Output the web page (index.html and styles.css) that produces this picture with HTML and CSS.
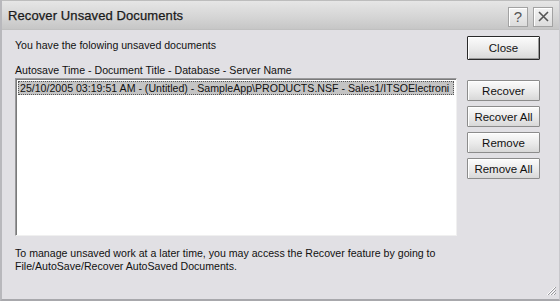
FILE: index.html
```html
<!DOCTYPE html>
<html>
<head>
<meta charset="utf-8">
<link rel="stylesheet" href="styles.css">
</head>
<body>
<div class="dialog">
  <div class="titlebar">
    <span class="title">Recover Unsaved Documents</span>
    <div class="tbtns">
      <span class="tbtn help">?</span>
      <span class="tbtn close">
        <svg width="13" height="13" viewBox="0 0 13 13"><path d="M2 2 L11 11 M11 2 L2 11" stroke="#555" stroke-width="1.6" fill="none"/></svg>
      </span>
    </div>
  </div>
  <div class="body">
    <div class="main">
      <div class="left">
        <p class="intro">You have the folowing unsaved documents</p>
        <p class="colhead">Autosave Time - Document Title - Database - Server Name</p>
        <div class="listbox">
          <div class="row selected">25/10/2005 03:19:51 AM - (Untitled) - SampleApp\PRODUCTS.NSF - Sales1/ITSOElectroni</div>
        </div>
      </div>
      <div class="right">
        <button class="btn btn-close">Close</button>
        <div class="actions">
          <button class="btn">Recover</button>
          <button class="btn">Recover All</button>
          <button class="btn">Remove</button>
          <button class="btn">Remove All</button>
        </div>
      </div>
    </div>
    <p class="footer">To manage unsaved work at a later time, you may access the Recover feature by going to<br>File/AutoSave/Recover AutoSaved Documents.</p>
    <svg class="grip" width="12" height="12" viewBox="0 0 12 12">
      <path d="M11 3 L3 11 M11 6 L6 11 M11 9 L9 11" stroke="#fff" stroke-width="1" fill="none"/>
      <path d="M12 3 L4 11 M12 6 L7 11 M12 9 L10 11" stroke="#9a9a9e" stroke-width="1" fill="none"/>
    </svg>
  </div>
</div>
</body>
</html>
```
FILE: styles.css
```css
* { box-sizing: border-box; }
html, body { margin: 0; padding: 0; }
body {
  width: 560px;
  height: 301px;
  overflow: hidden;
  font-family: "Liberation Sans", Arial, sans-serif;
  font-size: 10.6px;
  color: #111;
  background: #dcdce0;
}
.dialog {
  width: 560px;
  height: 301px;
  display: flex;
  flex-direction: column;
  border-left: 2px solid #b8b8bc;
  border-right: 1px solid #c8c8cc;
  border-bottom: 2px solid #a8a8ac;
  background: #e1e0e4;
}
.titlebar {
  height: 30px;
  flex: none;
  display: flex;
  align-items: center;
  justify-content: space-between;
  padding: 0 6px 0 6px;
  background: linear-gradient(#e6e6e6, #d4d4d4 60%, #c6c6c6);
  border-top: 1px solid #bdbdbd;
  border-bottom: 1px solid #c0c0c0;
}
.title {
  font-size: 13px;
  color: #1a1a1a;
  letter-spacing: 0.1px;
  padding-top: 1px;
  -webkit-text-stroke: 0.25px #1a1a1a;
}
.tbtns { display: flex; gap: 5px; padding-top: 3px; }
.tbtn {
  width: 20px;
  height: 20px;
  display: flex;
  align-items: center;
  justify-content: center;
  background: linear-gradient(#f4f4f4, #dcdcdc);
  border: 1px solid #a2a2a2;
  box-shadow: inset 1px 1px 0 #fff;
  font-size: 15px;
  color: #555;
}
.body {
  flex: 1;
  position: relative;
  padding: 6px 0 0 13px;
  display: flex;
  flex-direction: column;
}
.main { display: flex; }
.left { width: 442px; }
.intro { margin: 3px 0 0 0; height: 17px; line-height: 13px; }
.colhead { margin: 8px 0 0 0; line-height: 13px; }
.listbox {
  width: 442px;
  height: 158px;
  margin-top: 1px;
  background: #fff;
  border: 1px solid #9a9a9c;
  border-right-color: #f0f0f0;
  border-bottom-color: #f0f0f0;
  box-shadow: inset 1px 1px 0 #7a7a7a;
  padding: 2px 2px 0 2px;
  overflow: hidden;
}
.row {
  white-space: nowrap;
  height: 14px;
  line-height: 12px;
  padding-left: 1px;
}
.row.selected {
  background: #c4c4c4;
  border: 1px dotted #555;
}
.right {
  margin-left: 10px;
  width: 74px;
  display: flex;
  flex-direction: column;
}
.btn {
  font-family: "Liberation Sans", Arial, sans-serif;
  font-size: 11.5px;
  color: #111;
  width: 73px;
  height: 21px;
  padding: 0;
  background: linear-gradient(#fbfbfb, #eaeaea 55%, #d8d8d8);
  border: 1px solid #8c8c8c;
  border-radius: 1px;
  box-shadow: inset 1px 1px 0 #fff;
}
.btn-close {
  height: 24px;
  border: 1px solid #2a2a2a;
  box-shadow: inset 1px 1px 0 #fff, inset -1px -1px 0 #9a9a9a;
}
.actions {
  margin-top: 20px;
  display: flex;
  flex-direction: column;
  gap: 5px;
}
.footer {
  margin: 11px 0 0 0;
  line-height: 13px;
}
.grip {
  position: absolute;
  right: 3px;
  bottom: 3px;
}
```
